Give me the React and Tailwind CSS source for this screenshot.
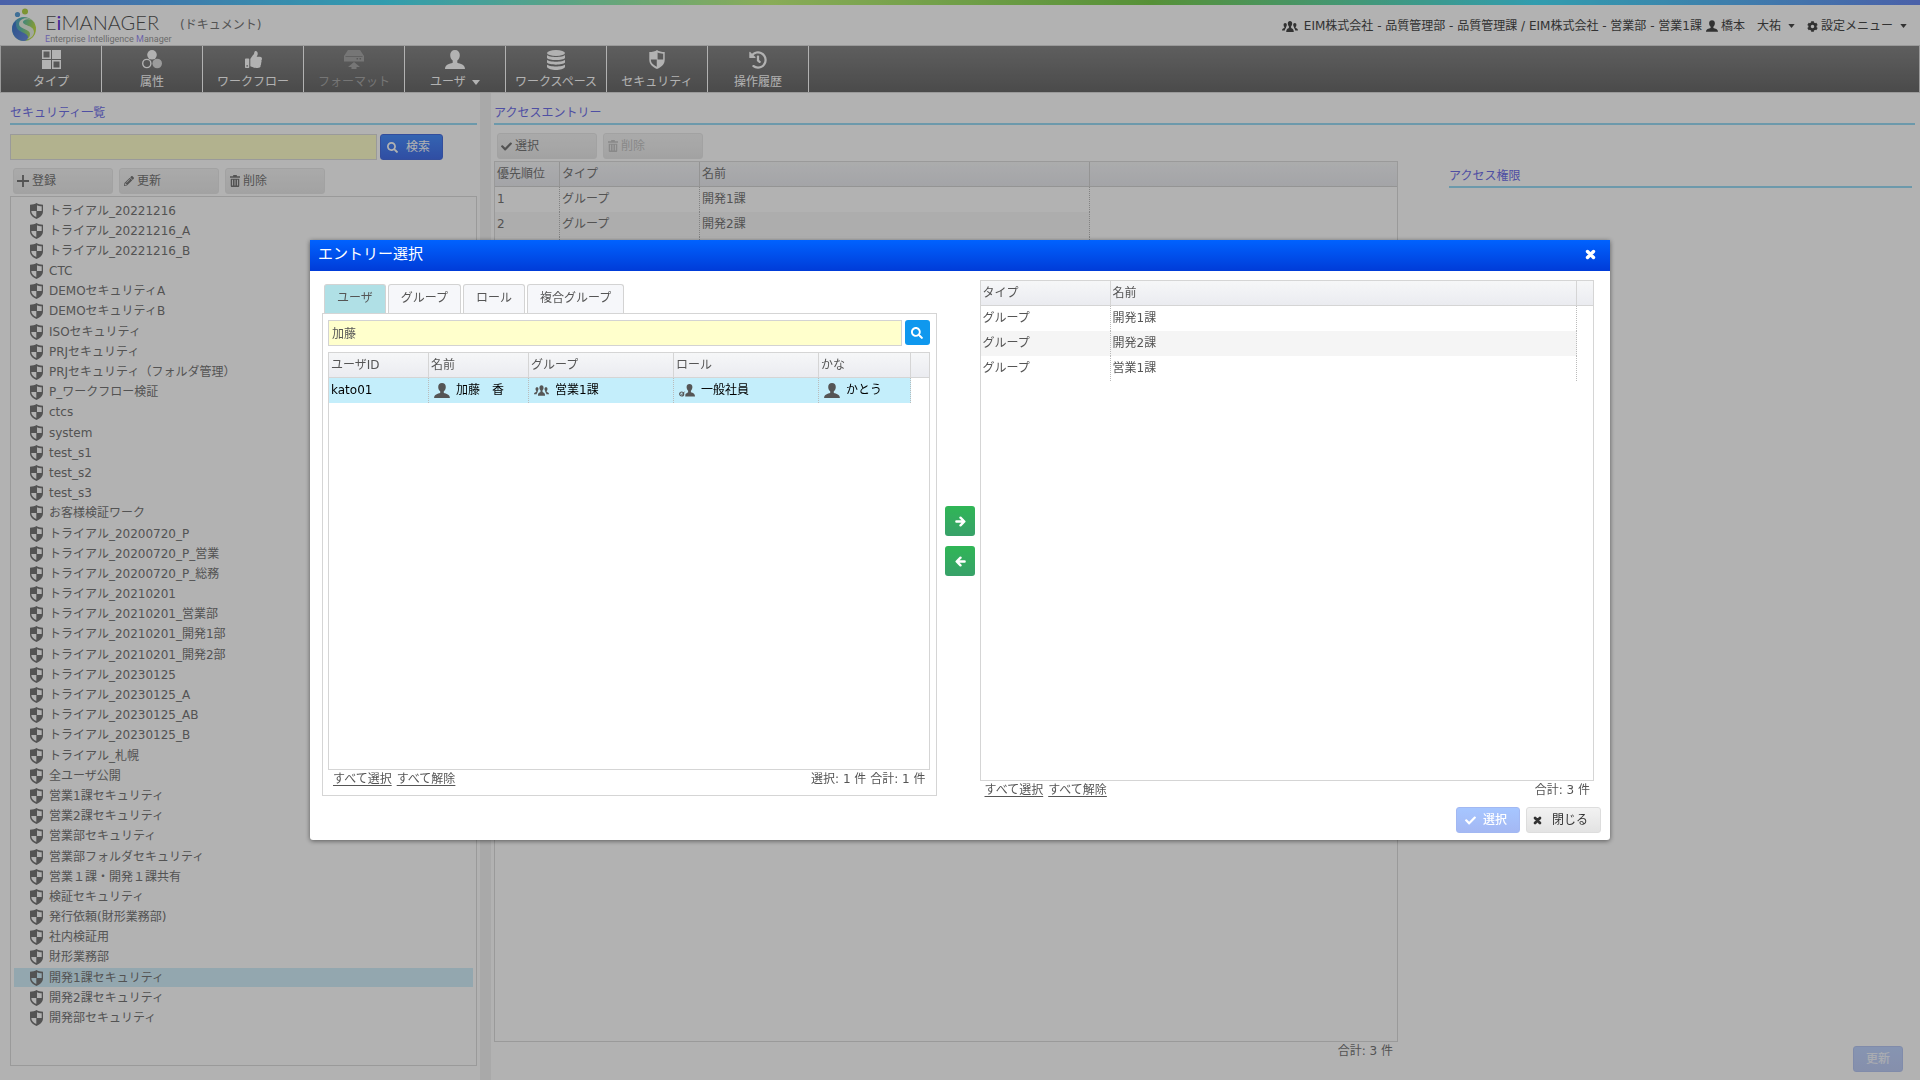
import React from "react";
import { FaCheck, FaCog, FaHistory, FaPencilAlt, FaSearch, FaThumbsUp } from "react-icons/fa";

const securities = [
  "トライアル_20221216", "トライアル_20221216_A", "トライアル_20221216_B", "CTC",
  "DEMOセキュリティA", "DEMOセキュリティB", "ISOセキュリティ", "PRJセキュリティ",
  "PRJセキュリティ（フォルダ管理）", "P_ワークフロー検証", "ctcs", "system",
  "test_s1", "test_s2", "test_s3", "お客様検証ワーク",
  "トライアル_20200720_P", "トライアル_20200720_P_営業", "トライアル_20200720_P_総務",
  "トライアル_20210201", "トライアル_20210201_営業部", "トライアル_20210201_開発1部",
  "トライアル_20210201_開発2部", "トライアル_20230125", "トライアル_20230125_A",
  "トライアル_20230125_AB", "トライアル_20230125_B", "トライアル_札幌", "全ユーザ公開",
  "営業1課セキュリティ", "営業2課セキュリティ", "営業部セキュリティ",
  "営業部フォルダセキュリティ", "営業１課・開発１課共有", "検証セキュリティ",
  "発行依頼(財形業務部)", "社内検証用", "財形業務部", "開発1課セキュリティ",
  "開発2課セキュリティ", "開発部セキュリティ",
];
const selectedSecurity = "開発1課セキュリティ";
const entries = ["開発1課", "開発2課", "営業1課"];

const svg = (className, viewBox, children) => (
  <svg className={className} viewBox={viewBox} fill="currentColor" aria-hidden="true">{children}</svg>
);

const Shield = ({ className }) => svg(className, "0 0 13 16", (
  <path fillRule="evenodd" d="M6.500 0C5 1.200 2.600 1.700 0 1.700V8c0 4 2.500 6.300 6.500 8 4-1.700 6.500-4 6.500-8V1.700C10.400 1.700 8 1.200 6.500 0ZM7 2.200c1.400.6 2.800.9 4.700 1V8H7ZM1.300 8H6.300v6C3.400 12.600 1.400 11 1.300 8Z" />
));
const Person = ({ className }) => svg(className, "0 0 20 19", (
  <path d="M10 0c3 0 4.800 2 4.800 5 0 2.200-.9 4.400-2.500 5.600v2.200c3 1 7.700 1.900 7.700 6.200H0c0-4.300 4.700-5.200 7.700-6.200v-2.200C6.100 9.400 5.200 7.200 5.200 5c0-3 1.800-5 4.800-5Z" />
));
const Group = ({ className }) => svg(className, "0 0 16 11", (
  <>
    <path d="M8 0c1.400 0 2.200 1 2.200 2.500 0 1.100-.4 2.200-1.100 2.800v1.800c1.300.5 2.700 1 2.700 3.900H4.200c0-2.900 1.400-3.400 2.700-3.900V5.300C6.200 4.700 5.800 3.600 5.800 2.500 5.800 1 6.600 0 8 0Z" />
    <path d="M3.200 2c1 0 1.600.7 1.600 1.900 0 .8-.3 1.600-.8 2v1.200c-.8.7-1.100 1.400-1.200 2.400H0c0-1.600 1.100-2 2.400-2.400V5.900c-.5-.4-.8-1.200-.8-2C1.600 2.700 2.200 2 3.200 2ZM12.800 2c1 0 1.600.7 1.600 1.900 0 .8-.3 1.600-.8 2v1.200c1.300.4 2.400.8 2.400 2.400h-2.800c-.1-1-.4-1.700-1.200-2.400V5.900c-.5-.4-.8-1.200-.8-2 0-1.200.6-1.900 1.600-1.900Z" />
  </>
));
const Role = ({ className }) => svg(className, "0 0 16 13", (
  <>
    <path d="M10.500 0c1.800 0 2.900 1.200 2.900 3.100 0 1.500-.6 2.800-1.500 3.600v1.600c1.900.7 4.100 1.200 4.100 4.200H6.200L6.500 10l2.600-1.700V6.700C8.200 5.900 7.600 4.600 7.600 3.100 7.600 1.200 8.700 0 10.500 0Z" />
    <circle cx="2.700" cy="10" r="2" fill="none" stroke="currentColor" strokeWidth="1.200" />
    <path d="m2 9.700 1 1 2.500-3" fill="none" stroke="currentColor" strokeWidth="1" />
  </>
));
const Cross = ({ className }) => svg(className, "0 0 11 11", (
  <path d="m2.500 2.500 6 6m0-6-6 6" fill="none" stroke="currentColor" strokeWidth="3.400" strokeLinecap="round" />
));
const Trash = ({ className }) => svg(className, "0 0 11 13", (
  <path fillRule="evenodd" d="M3.500 0h4v1.300H11V3H0V1.300h3.500ZM.8 4h9.400v7.600c0 .9-.5 1.400-1.300 1.400H2.100c-.8 0-1.300-.5-1.300-1.400Zm1.500 1.200v6.300h1V5.200Zm2.700 0v6.300h1V5.200Zm2.700 0v6.300h1V5.200Z" />
));
const Plus = ({ className }) => svg(className, "0 0 13 13", <path d="M5.500 0h2v5.500H13v2H7.500V13h-2V7.500H0v-2h5.500Z" />);
const Arrow = ({ className }) => svg(className, "0 0 12 12", (
  <path d="M1.500 6h8M6 1.800 10.200 6 6 10.200" fill="none" stroke="currentColor" strokeWidth="2.600" strokeLinecap="round" strokeLinejoin="round" />
));
const Caret = ({ className }) => svg(className, "0 0 8 5", <path d="M0 0h8L4 5Z" />);
const Tiles = ({ className }) => svg(className, "0 0 19 19", (
  <path fillRule="evenodd" d="M0 0h9v9H0ZM1.500 1.500v6h6v-6ZM10 0h9v9h-9ZM0 10h9v9H0ZM10 10h9v9h-9ZM11.500 11.500v6h6v-6Z" />
));
const Circles = ({ className }) => svg(className, "0 0 20 19", (
  <>
    <circle cx="10" cy="4.800" r="4.800" />
    <circle cx="4.800" cy="13.500" r="4.100" fill="none" stroke="currentColor" strokeWidth="1.400" />
    <circle cx="15.200" cy="13.500" r="4.800" opacity=".75" />
  </>
));
const Drive = ({ className }) => svg(className, "0 0 20 19", (
  <path fillRule="evenodd" d="M4 0h12l4 6v5.500H0V6ZM1.500 6.300v.7h17v-.7ZM12.500 8v1.600h1.600V8Zm3 0v1.600h1.600V8ZM10 12l6 5h-3.500v2h-5v-2H4Z" />
));
const Database = ({ className }) => svg(className, "0 0 18 20", (
  <>
    <ellipse cx="9" cy="3" rx="9" ry="3" />
    <path d="M0 5c2 2.600 16 2.600 18 0v3c-2 2.800-16 2.800-18 0ZM0 9.800c2 2.600 16 2.600 18 0v2.800c-2 2.800-16 2.800-18 0ZM0 14.500c2 2.600 16 2.600 18 0V17c-2 4-16 4-18 0Z" />
  </>
));

const Logo = () => (
  <svg className="h-[34px] w-[26px]" viewBox="0 0 26 34" aria-hidden="true">
    <defs>
      <linearGradient id="orb" x1="0" y1="0" x2="1" y2="0.300">
        <stop offset="0" stopColor="#4c8fe0" />
        <stop offset="0.500" stopColor="#63c2a8" />
        <stop offset="1" stopColor="#c2e04a" />
      </linearGradient>
      <linearGradient id="orbLow" x1="0" y1="0" x2="1" y2="1">
        <stop offset="0" stopColor="#3c78cc" />
        <stop offset="1" stopColor="#6f8fe0" />
      </linearGradient>
    </defs>
    <circle cx="13" cy="21" r="12" fill="url(#orb)" />
    <path d="M2 16c-3 9 3 17 11 17 6-1 5-6 0-8C7 22.500 4 20 5 13Z" fill="url(#orbLow)" />
    <path d="M21 12c-6-4-13-1-13 4 0 5 11 5 11 10 0 2-1 4-3 5 3 0 7-3 7-7 0-7-11-6-11-10 0-2 4-4 9-2Z" fill="#e9f1e4" />
    <circle cx="6.500" cy="6.500" r="2.600" fill="#5c9fd8" />
    <circle cx="14" cy="3.500" r="3" fill="#b3d44a" />
  </svg>
);

const ToolButton = ({ icon, label, disabled }) => (
  <button disabled={disabled} className="flex h-[26px] w-[100px] items-center gap-[3px] rounded-[3px] border border-[#e8e8e8] bg-linear-to-b from-[#f4f4f4] to-[#e9e9e9] pl-[3px] text-[#777] disabled:text-[#c4c4c4]">
    {icon}
    <span>{label}</span>
  </button>
);

const Title = ({ children }) => (
  <h2 className="h-[20px] border-b-2 border-[#9bdcf5] leading-[16px] text-[#7272ea]">{children}</h2>
);

const Th = ({ children }) => <th scope="col" className="h-[25px] border-r border-b border-[#d5d5d5] px-0.5 py-0 text-left font-normal">{children}</th>;
const headClass = "bg-linear-to-b from-[#f6f7f8] to-[#eaebf0]";
const Td = ({ children }) => <td className="h-[25px] border-r border-dotted border-[#bbb] px-0.5 pt-0 pb-0.5 whitespace-nowrap">{children}</td>;
const IconText = ({ icon, children }) => <span className="flex items-center gap-1.5 pl-[3px]"><span className="pt-0.5">{icon}</span><span>{children}</span></span>;

const navItems = [
  { label: "タイプ", icon: <Tiles className="size-[19px]" /> },
  { label: "属性", icon: <Circles className="h-[19px] w-[20px]" /> },
  { label: "ワークフロー", icon: <FaThumbsUp className="size-[17px]" /> },
  { label: "フォーマット", icon: <Drive className="h-[19px] w-[20px]" />, disabled: true },
  { label: "ユーザ", icon: <Person className="h-[19px] w-[20px]" />, menu: true },
  { label: "ワークスペース", icon: <Database className="h-[20px] w-[18px]" /> },
  { label: "セキュリティ", icon: <Shield className="h-[19px] w-[16px]" /> },
  { label: "操作履歴", icon: <FaHistory className="size-[18px]" /> },
];

function Header() {
  return (
    <header>
      <div className="h-[5px] bg-[linear-gradient(90deg,#6b8bf3,#47e0fa_20%,#c5f67e_40%,#7ccf50_60%,#47e0fa_80%,#6b8bf3)]" />
      <div className="flex h-[41px] items-center border-b border-[#ddd] pr-[13px] pl-[11px] text-[#484848]">
        <Logo />
        <div className="ml-2 w-[127px] pt-1 text-[#555]">
          <div className="font-['Lato','Noto_Sans_CJK_JP',sans-serif] text-[20px] leading-[24px] font-light whitespace-nowrap">
            E<span className="font-normal text-[#6236d8]">i</span>MANAGER
          </div>
          <div className="font-['Roboto','Noto_Sans_CJK_JP',sans-serif] text-[9px] leading-[11px] whitespace-nowrap text-[#999]">
            <span className="text-[#9b8ff5]">E</span>nterprise <span className="text-[#9b8ff5]">I</span>ntelligence <span className="text-[#9b8ff5]">M</span>anager
          </div>
        </div>
        <span className="ml-2 text-[#777]">(ドキュメント)</span>
        <div className="ml-auto flex items-center pt-0.5">
          <Group className="mr-1.5 h-[11px] w-[16px]" />
          <span>EIM株式会社 - 品質管理部 - 品質管理課 / EIM株式会社 - 営業部 - 営業1課</span>
          <button className="ml-1 flex items-center gap-[3px]">
            <Person className="size-[12px]" />橋本　大祐<Caret className="ml-1 h-[4px] w-[7px]" />
          </button>
          <button className="ml-3 flex items-center gap-[3px]">
            <FaCog className="size-[11px]" />設定メニュー<Caret className="ml-1 h-[4px] w-[7px]" />
          </button>
        </div>
      </div>
      <nav className="flex h-[47px] border-x border-b border-[#ddd] bg-linear-to-b from-[#888] to-[#6b6b6b] text-white">
        {navItems.map((item) => (
          <button key={item.label} disabled={item.disabled} className="flex w-[101px] flex-col items-center gap-[3px] border-r border-white pt-[3px] pb-px disabled:text-[#aaa]">
            <span className="flex h-[21px] items-center justify-center">{item.icon}</span>
            <span className="flex items-center gap-1.5 leading-[18px]">
              {item.label}
              {item.menu && <Caret className="h-[5px] w-[8px]" />}
            </span>
          </button>
        ))}
      </nav>
    </header>
  );
}

function SecurityList() {
  return (
    <section className="flex w-1/4 shrink-0 flex-col pt-[12px] pr-[3px] pb-[14px] pl-[10px]">
      <Title>セキュリティ一覧</Title>
      <form className="mt-[9px] flex gap-[3px] pr-[34px]" onSubmit={(e) => e.preventDefault()}>
        <input type="text" aria-label="セキュリティ検索" className="h-[26px] min-w-0 flex-1 border border-[#ddd] bg-[#ffffcc] px-1" />
        <button className="flex h-[26px] w-[63px] items-center gap-2 rounded-[3px] border border-[#4a70e0] bg-linear-to-b from-[#4a90ff] to-[#4670ea] pl-1.5 text-white">
          <FaSearch className="size-[11px]" />検索
        </button>
      </form>
      <div className="mt-2 flex gap-1.5 pl-[3px]">
        <ToolButton icon={<Plus className="size-[12px]" />} label="登録" />
        <ToolButton icon={<FaPencilAlt className="ml-px size-[10px]" />} label="更新" />
        <ToolButton icon={<Trash className="ml-px h-[12px] w-[10px]" />} label="削除" />
      </div>
      <ul className="mt-0.5 flex flex-1 flex-col border border-[#ddd] px-[3px] pt-1 pb-9 text-[#777]">
        {securities.map((name) => (
          <li key={name} className="flex-1">
            <button className={name === selectedSecurity ? "flex h-[19px] w-full items-center gap-1.5 bg-[#d3f0fb] pl-4" : "flex h-[19px] w-full items-center gap-1.5 pl-4"}>
              <Shield className="h-[16px] w-[13px]" />
              <span className="leading-[20px]">{name}</span>
            </button>
          </li>
        ))}
      </ul>
    </section>
  );
}

function AccessEntries() {
  return (
    <section className="flex min-w-0 flex-1 flex-col pt-[12px] pr-[5px] pb-2 pl-[3px]">
      <Title>アクセスエントリー</Title>
      <div className="flex flex-1">
        <div className="flex min-w-0 flex-1 flex-col pt-2">
          <div className="flex gap-1.5 pl-[3px]">
            <ToolButton icon={<FaCheck className="size-[11px]" />} label="選択" />
            <ToolButton icon={<Trash className="ml-px h-[12px] w-[10px]" />} label="削除" disabled />
          </div>
          <div className="mt-0.5 flex-1 border border-[#ddd]">
            <table className="w-full table-fixed border-separate border-spacing-0 text-[#777]">
              <colgroup><col className="w-[65px]" /><col className="w-[140px]" /><col className="w-[390px]" /><col /></colgroup>
              <thead className={headClass}>
                <tr><Th>優先順位</Th><Th>タイプ</Th><Th>名前</Th><td className="border-b border-[#d5d5d5]" /></tr>
              </thead>
              <tbody>
                {entries.map((name, i) => (
                  <tr key={name} className="[&:nth-child(even)>td:not(:last-child)]:bg-[#f8f8f8]">
                    <Td>{i + 1}</Td><Td>グループ</Td><Td>{name}</Td><td />
                  </tr>
                ))}
              </tbody>
            </table>
          </div>
          <div className="h-[30px] pr-[5px] text-right leading-[18px] text-[#777]">合計: 3 件</div>
        </div>
        <div className="mr-[3px] ml-[51px] flex w-[463px] shrink-0 flex-col justify-between pt-[43px]">
          <Title>アクセス権限</Title>
          <button disabled className="mr-[9px] h-[26px] w-[50px] self-end rounded-[3px] border border-[#b8c8f4] bg-linear-to-b from-[#c1d5ff] to-[#bfcdf6] font-medium text-white/80">更新</button>
        </div>
      </div>
    </section>
  );
}

const TableFooter = ({ summary }) => (
  <div className="flex h-5 items-start justify-between pr-1 pl-[5px] leading-[18px]">
    <span className="flex gap-[5px]">
      <a href="#all" className="underline underline-offset-2">すべて選択</a>
      <a href="#none" className="underline underline-offset-2">すべて解除</a>
    </span>
    <span>{summary}</span>
  </div>
);

function EntryDialog() {
  const tab = "h-[29px] rounded-t-[3px] border border-b-0 border-[#d3d3d3] px-3 pb-0.5";
  return (
    <div role="dialog" aria-modal="true" aria-labelledby="dialog-title" className="flex h-[600px] w-[1300px] max-w-full flex-col rounded-b-[3px] bg-white text-[#555] shadow-[0_1px_5px_rgba(0,0,0,0.5)]">
      <div className="flex h-[31px] items-center justify-between bg-linear-to-b from-[#0062ff] to-[#003bd8] pr-[14px] pb-1 pl-[8px] text-white">
        <h1 id="dialog-title" className="text-[15px] leading-[20px]">エントリー選択</h1>
        <button aria-label="ダイアログを閉じる" className="pt-0.5"><Cross className="size-[11px]" /></button>
      </div>
      <div className="flex flex-1 pr-[16px] pl-[12px]">
        <div className="flex min-w-0 flex-1 flex-col pt-[13px] pb-[11px]">
          <div role="tablist" className="flex gap-0.5 pl-0.5">
            <button role="tab" aria-selected="true" className={`${tab} bg-[#b0e0e6]`}>ユーザ</button>
            <button role="tab" aria-selected="false" className={`${tab} bg-[#f6f7fa]`}>グループ</button>
            <button role="tab" aria-selected="false" className={`${tab} bg-[#f6f7fa]`}>ロール</button>
            <button role="tab" aria-selected="false" className={`${tab} bg-[#f6f7fa]`}>複合グループ</button>
          </div>
          <div className="flex flex-1 flex-col border border-[#d5d5d5] pt-1.5 pr-1.5 pb-[5px] pl-[5px]">
            <form className="flex gap-[3px]" onSubmit={(e) => e.preventDefault()}>
              <input type="text" aria-label="ユーザ検索" defaultValue="加藤" className="h-[26px] min-w-0 flex-1 border border-[#d3d3d3] bg-[#ffffcc] px-[3px] pb-0.5" />
              <button aria-label="検索" className="flex size-[25px] items-center justify-center rounded-[3px] bg-[#0f98ee] text-white"><FaSearch className="size-[12px]" /></button>
            </form>
            <div className="mt-1.5 flex-1 border border-[#d5d5d5]">
              <table className="w-full table-fixed border-separate border-spacing-0">
                <colgroup><col className="w-[100px]" /><col className="w-[100px]" /><col className="w-[145px]" /><col className="w-[145px]" /><col className="w-[92px]" /><col /></colgroup>
                <thead className={headClass}>
                  <tr><Th>ユーザID</Th><Th>名前</Th><Th>グループ</Th><Th>ロール</Th><Th>かな</Th><td className="border-b border-[#d5d5d5]" /></tr>
                </thead>
                <tbody>
                  <tr className="text-black [&_svg]:text-[#555] [&>td:not(:last-child)]:bg-[#c4eefb]">
                    <Td>kato01</Td>
                    <Td><IconText icon={<Person className="h-[15px] w-[16px]" />}>加藤　香</IconText></Td>
                    <Td><IconText icon={<Group className="h-[11px] w-[15px]" />}>営業1課</IconText></Td>
                    <Td><IconText icon={<Role className="h-[13px] w-[16px]" />}>一般社員</IconText></Td>
                    <Td><IconText icon={<Person className="h-[15px] w-[16px]" />}>かとう</IconText></Td>
                    <td />
                  </tr>
                </tbody>
              </table>
            </div>
            <TableFooter summary="選択: 1 件 合計: 1 件" />
          </div>
        </div>
        <div className="flex w-[43px] shrink-0 flex-col items-center justify-center gap-[10px] pt-1 pl-1">
          <button aria-label="追加" className="flex size-[30px] items-center justify-center rounded-[3px] bg-linear-to-b from-[#2fb655] to-[#38a169] text-white"><Arrow className="size-[11px]" /></button>
          <button aria-label="解除" className="flex size-[30px] items-center justify-center rounded-[3px] bg-linear-to-b from-[#2fb655] to-[#38a169] text-white"><Arrow className="size-[11px] rotate-180" /></button>
        </div>
        <div className="flex min-w-0 flex-1 flex-col pt-[9px] pb-[6px]">
          <div className="flex-1 border border-[#d5d5d5]">
            <table className="w-full table-fixed border-separate border-spacing-0">
              <colgroup><col className="w-[130px]" /><col /><col className="w-[16px]" /></colgroup>
              <thead className={headClass}>
                <tr><Th>タイプ</Th><Th>名前</Th><td className="border-b border-[#d5d5d5]" /></tr>
              </thead>
              <tbody>
                {entries.map((name) => (
                  <tr key={name} className="[&:nth-child(even)>td:not(:last-child)]:bg-[#f5f5f5]">
                    <Td>グループ</Td><Td>{name}</Td><td />
                  </tr>
                ))}
              </tbody>
            </table>
          </div>
          <TableFooter summary="合計: 3 件" />
        </div>
      </div>
      <div className="flex justify-end gap-1.5 pr-[9px] pb-[7px]">
        <button disabled className="flex h-[26px] w-[64px] items-center gap-[7px] rounded-[3px] border border-[#a2b8f2] bg-linear-to-b from-[#a6c6ff] to-[#a4b8f3] pl-2 font-medium text-white"><FaCheck className="size-[11px]" />選択</button>
        <button className="flex h-[26px] w-[75px] items-center gap-[10px] rounded-[3px] border border-[#ddd] bg-linear-to-b from-[#f2f2f2] to-[#e3e3e3] pl-1.5 text-[#333]"><Cross className="size-[9px]" />閉じる</button>
      </div>
    </div>
  );
}

export default function App() {
  return (
    <div className="flex min-h-screen flex-col bg-white font-['DejaVu_Sans','Noto_Sans_CJK_JP',sans-serif] text-[12px] leading-[18px]">
      <Header />
      <main className="flex flex-1">
        <SecurityList />
        <div className="w-[11px] shrink-0 bg-[#f2f2f2]" />
        <AccessEntries />
      </main>
      <div className="fixed inset-0 flex items-center justify-center bg-black/30">
        <EntryDialog />
      </div>
    </div>
  );
}
